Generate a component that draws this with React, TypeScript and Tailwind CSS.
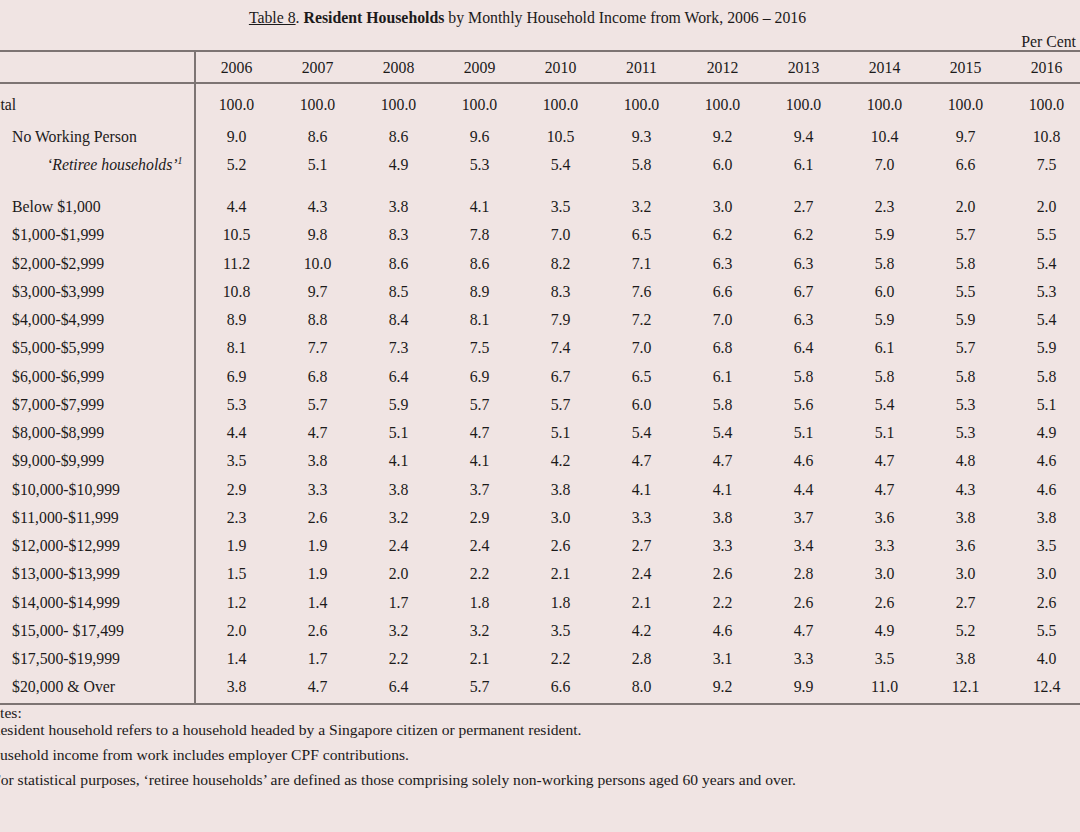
import React from "react";

const years = ["2006","2007","2008","2009","2010","2011","2012","2013","2014","2015","2016"];

type Row = { label: React.ReactNode; indent: number; vals: string[] };

const total: Row = { label: "Total", indent: 0, vals: Array(11).fill("100.0") };
const noWork: Row = { label: "No Working Person", indent: 28, vals: "9.0 8.6 8.6 9.6 10.5 9.3 9.2 9.4 10.4 9.7 10.8".split(" ") };
const retiree: Row = {
  label: (
    <span className="italic">
      ‘Retiree households’<span className="text-[10px] relative top-[-6px]">1</span>
    </span>
  ),
  indent: 63,
  vals: "5.2 5.1 4.9 5.3 5.4 5.8 6.0 6.1 7.0 6.6 7.5".split(" "),
};

const incomeRows: [string, string][] = [
  ["Below $1,000", "4.4 4.3 3.8 4.1 3.5 3.2 3.0 2.7 2.3 2.0 2.0"],
  ["$1,000-$1,999", "10.5 9.8 8.3 7.8 7.0 6.5 6.2 6.2 5.9 5.7 5.5"],
  ["$2,000-$2,999", "11.2 10.0 8.6 8.6 8.2 7.1 6.3 6.3 5.8 5.8 5.4"],
  ["$3,000-$3,999", "10.8 9.7 8.5 8.9 8.3 7.6 6.6 6.7 6.0 5.5 5.3"],
  ["$4,000-$4,999", "8.9 8.8 8.4 8.1 7.9 7.2 7.0 6.3 5.9 5.9 5.4"],
  ["$5,000-$5,999", "8.1 7.7 7.3 7.5 7.4 7.0 6.8 6.4 6.1 5.7 5.9"],
  ["$6,000-$6,999", "6.9 6.8 6.4 6.9 6.7 6.5 6.1 5.8 5.8 5.8 5.8"],
  ["$7,000-$7,999", "5.3 5.7 5.9 5.7 5.7 6.0 5.8 5.6 5.4 5.3 5.1"],
  ["$8,000-$8,999", "4.4 4.7 5.1 4.7 5.1 5.4 5.4 5.1 5.1 5.3 4.9"],
  ["$9,000-$9,999", "3.5 3.8 4.1 4.1 4.2 4.7 4.7 4.6 4.7 4.8 4.6"],
  ["$10,000-$10,999", "2.9 3.3 3.8 3.7 3.8 4.1 4.1 4.4 4.7 4.3 4.6"],
  ["$11,000-$11,999", "2.3 2.6 3.2 2.9 3.0 3.3 3.8 3.7 3.6 3.8 3.8"],
  ["$12,000-$12,999", "1.9 1.9 2.4 2.4 2.6 2.7 3.3 3.4 3.3 3.6 3.5"],
  ["$13,000-$13,999", "1.5 1.9 2.0 2.2 2.1 2.4 2.6 2.8 3.0 3.0 3.0"],
  ["$14,000-$14,999", "1.2 1.4 1.7 1.8 1.8 2.1 2.2 2.6 2.6 2.7 2.6"],
  ["$15,000- $17,499", "2.0 2.6 3.2 3.2 3.5 4.2 4.6 4.7 4.9 5.2 5.5"],
  ["$17,500-$19,999", "1.4 1.7 2.2 2.1 2.2 2.8 3.1 3.3 3.5 3.8 4.0"],
  ["$20,000 & Over", "3.8 4.7 6.4 5.7 6.6 8.0 9.2 9.9 11.0 12.1 12.4"],
];

function DataRow({ row, h }: { row: Row; h: string }) {
  return (
    <div className={`flex ${h}`}>
      <div className="w-[212px] shrink-0 border-r-2 border-[#7d7473] flex items-center pt-[2px]">
        <span style={{ paddingLeft: row.indent }} className="whitespace-nowrap">{row.label}</span>
      </div>
      {row.vals.map((v, i) => (
        <div key={i} className="w-[81px] shrink-0 flex items-center justify-center pt-[2px]">
          {v}
        </div>
      ))}
    </div>
  );
}

function Spacer({ h }: { h: string }) {
  return (
    <div className={`flex ${h}`}>
      <div className="w-[212px] shrink-0 border-r-2 border-[#7d7473]" />
    </div>
  );
}

export default function App() {
  return (
    <div
      className="w-[1080px] h-[832px] overflow-hidden bg-[#f0e4e3] text-[#1c1a1a] text-[15.8px] leading-none"
      style={{ fontFamily: '"Liberation Serif", "Times New Roman", serif' }}
    >
      <div className="w-[1055px] h-[34px] pt-[2px] flex items-center justify-center whitespace-nowrap">
        <span>
          <span className="underline">Table 8</span>. <b>Resident Households</b> by Monthly Household Income from Work, 2006 – 2016
        </span>
      </div>
      <div className="h-[16px] flex items-center justify-end pr-[4px]">Per Cent</div>
      <div className="ml-[-16px] w-[1120px]">
        <div className="border-t-2 border-b-2 border-[#7d7473] flex h-[34px]">
          <div className="w-[212px] shrink-0 border-r-2 border-[#7d7473]" />
          {years.map((y) => (
            <div key={y} className="w-[81px] shrink-0 flex items-center justify-center pt-[2px]">
              {y}
            </div>
          ))}
        </div>
        <Spacer h="h-[6px]" />
        <DataRow row={total} h="h-[28px]" />
        <Spacer h="h-[4px]" />
        <DataRow row={noWork} h="h-[28px]" />
        <DataRow row={retiree} h="h-[28px]" />
        <Spacer h="h-[14px]" />
        {incomeRows.map(([l, v]) => (
          <DataRow key={l} row={{ label: l, indent: 28, vals: v.split(" ") }} h="h-[28.25px]" />
        ))}
        <div className="border-b-2 border-[#7d7473]">
          <Spacer h="h-[2px]" />
        </div>
      </div>
      <div className="whitespace-nowrap text-[15.6px]">
        <div className="h-[17px] flex items-center ml-[-19px]">Notes:</div>
        <div className="h-[17px] flex items-center ml-[-10px]">Resident household refers to a household headed by a Singapore citizen or permanent resident.</div>
        <div className="h-[25px] mt-[4px] flex items-center ml-[-19px]">Household income from work includes employer CPF contributions.</div>
        <div className="h-[25px] flex items-center ml-[-8px]">For statistical purposes, ‘retiree households’ are defined as those comprising solely non-working persons aged 60 years and over.</div>
      </div>
    </div>
  );
}
